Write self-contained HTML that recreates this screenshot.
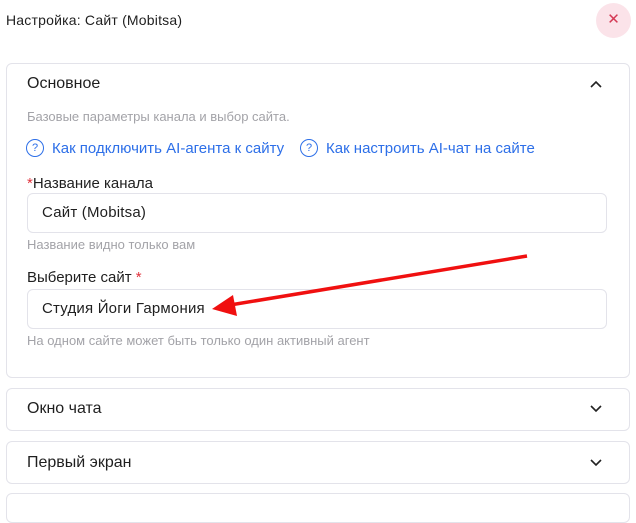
<!DOCTYPE html>
<html><head><meta charset="utf-8"><style>
*{box-sizing:border-box;margin:0;padding:0}
body{width:636px;height:503px;overflow:hidden;background:#fff;font-family:"Liberation Sans",sans-serif;color:#1f1f1f;position:relative}
.a{position:absolute;white-space:nowrap}
.card{position:absolute;left:6px;width:624px;border:1px solid #e3e3ea;border-radius:6px;background:#fff}
.inp{position:absolute;left:27px;width:580px;height:40px;border:1px solid #e3e3ea;border-radius:6px;font-size:15px;padding:0 14px;line-height:38px;letter-spacing:.2px}
.gray{color:#a3a3a8;font-size:13px}
.blue{color:#2d6fe8;font-size:15px;display:flex;align-items:center}
.q{display:inline-block;width:18px;height:18px;border:1.3px solid #2d6fe8;border-radius:50%;font-size:11px;text-align:center;line-height:16px;margin-right:8px}
.h{font-size:16px}
</style></head><body>
<div class="a" style="left:6px;top:12px;font-size:14px;letter-spacing:.2px">Настройка: Сайт (Mobitsa)</div>
<div class="a" style="left:596px;top:3px;width:35px;height:35px;border-radius:50%;background:#fbe3e9;color:#d43a55;font-size:15px;text-align:center;line-height:34px">✕</div>
<div class="card" style="top:63px;height:315px"></div>
<div class="a h" style="left:27px;top:75px">Основное</div>
<svg class="a" style="left:590px;top:80px" width="12" height="8"><path d="M1 7L6 2L11 7" stroke="#222" stroke-width="1.6" fill="none"/></svg>
<div class="a gray" style="left:27px;top:109px">Базовые параметры канала и выбор сайта.</div>
<div class="a blue" style="left:26px;top:139px"><span class="q">?</span>Как подключить AI-агента к сайту</div>
<div class="a blue" style="left:300px;top:139px"><span class="q">?</span>Как настроить AI-чат на сайте</div>
<div class="a" style="left:27px;top:175px;font-size:15px"><span style="color:#e0323c">*</span>Название канала</div>
<div class="inp" style="top:193px">Сайт (Mobitsa)</div>
<div class="a gray" style="left:27px;top:237px">Название видно только вам</div>
<div class="a" style="left:27px;top:269px;font-size:15px">Выберите сайт <span style="color:#e0323c">*</span></div>
<div class="inp" style="top:289px">Студия Йоги Гармония</div>
<div class="a gray" style="left:27px;top:333px">На одном сайте может быть только один активный агент</div>
<div class="card" style="top:388px;height:43px"></div>
<div class="a h" style="left:27px;top:400px">Окно чата</div>
<svg class="a" style="left:590px;top:405px" width="12" height="8"><path d="M1 1L6 6L11 1" stroke="#222" stroke-width="1.6" fill="none"/></svg>
<div class="card" style="top:441px;height:43px"></div>
<div class="a h" style="left:27px;top:454px">Первый экран</div>
<svg class="a" style="left:590px;top:459px" width="12" height="8"><path d="M1 1L6 6L11 1" stroke="#222" stroke-width="1.6" fill="none"/></svg>
<div class="card" style="top:493px;height:30px"></div>
<svg class="a" style="left:0;top:0" width="636" height="503"><line x1="527" y1="256" x2="230" y2="305" stroke="#f01010" stroke-width="3.5"/><polygon points="212,309 233,295 237,316" fill="#f01010"/></svg>
</body></html>
